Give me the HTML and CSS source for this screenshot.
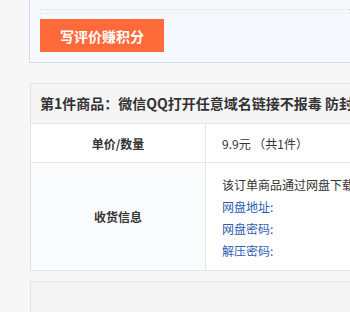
FILE: index.html
```html
<!DOCTYPE html>
<html>
<head>
    <meta charset="utf-8">
    <title>订单详情</title>
    <link rel="stylesheet" href="styles.css">
</head>
<body>
    <div class="page">
        <!-- 评价区 -->
        <div class="review-box">
            <div class="review-summary"></div>
            <div class="review-line"></div>
            <button class="review-button">写评价赚积分</button>
        </div>

        <!-- 商品信息 -->
        <div class="goods-box">
            <div class="goods-title">第1件商品：微信QQ打开任意域名链接不报毒 防封域名跳转系统源码</div>
            <table class="goods-table">
                <tr>
                    <th>单价/数量</th>
                    <td>9.9元 （共1件）</td>
                </tr>
                <tr class="ship-row">
                    <th>收货信息</th>
                    <td>
                        <div class="ship-line">该订单商品通过网盘下载</div>
                        <div class="ship-line link">网盘地址:</div>
                        <div class="ship-line link">网盘密码:</div>
                        <div class="ship-line link">解压密码:</div>
                    </td>
                </tr>
            </table>
        </div>

        <div class="goods-box next-box">
            <div class="goods-title"></div>
        </div>
    </div>
</body>
</html>
```

FILE: styles.css
```css
body {
    margin: 0;
    padding: 0;
    background-color: #f7f7f7;
    font-family: "Noto Sans CJK SC", "Microsoft YaHei", sans-serif;
    color: #333;
    overflow: hidden;
}

.page {
    padding-left: 29px;
    width: 700px;
}

.review-box {
    margin-top: -30px;
    background-color: #f5f9fd;
    border: 1px solid #cde0ec;
    padding: 0 10px 10px;
}

.review-summary {
    height: 38px;
    border-bottom: 1px dotted #cfd6dd;
}

.review-line {
    height: 3px;
    border-bottom: 1px dotted #e2e9f0;
}

.review-button {
    display: block;
    margin-top: 5px;
    width: 124px;
    height: 33px;
    border: none;
    background-color: #ff6a3a;
    color: #fff;
    font-family: inherit;
    font-size: 14px;
    font-weight: bold;
    cursor: pointer;
}

.goods-box {
    margin: 20px 0 0 1px;
    border: 1px solid #e3e3e3;
    background-color: #fff;
}

.goods-title {
    height: 39px;
    line-height: 39px;
    padding-left: 9px;
    background-color: #f5f5f5;
    border-bottom: 1px solid #e6e6e6;
    font-size: 14px;
    font-weight: bold;
    white-space: nowrap;
}

.goods-table {
    width: 100%;
    border-collapse: collapse;
}

.goods-table th {
    width: 174px;
    height: 38px;
    font-size: 12px;
    font-weight: bold;
    text-align: center;
    border-right: 1px solid #e6e6e6;
    padding: 0;
}

.goods-table td {
    padding: 0 0 0 16px;
    font-size: 12px;
    text-align: left;
}

.goods-table tr + tr th,
.goods-table tr + tr td {
    border-top: 1px solid #e6e6e6;
}

.ship-row th {
    height: 107px;
    background-color: #fafbfd;
}

.ship-row td {
    vertical-align: top;
    padding-top: 11px;
}

.ship-line {
    height: 22px;
    line-height: 22px;
}

.link {
    color: #2d5db0;
}

.next-box {
    margin-top: 10px;
}

.next-box .goods-title {
    height: 60px;
    background-color: #f4f4f4;
}
```
